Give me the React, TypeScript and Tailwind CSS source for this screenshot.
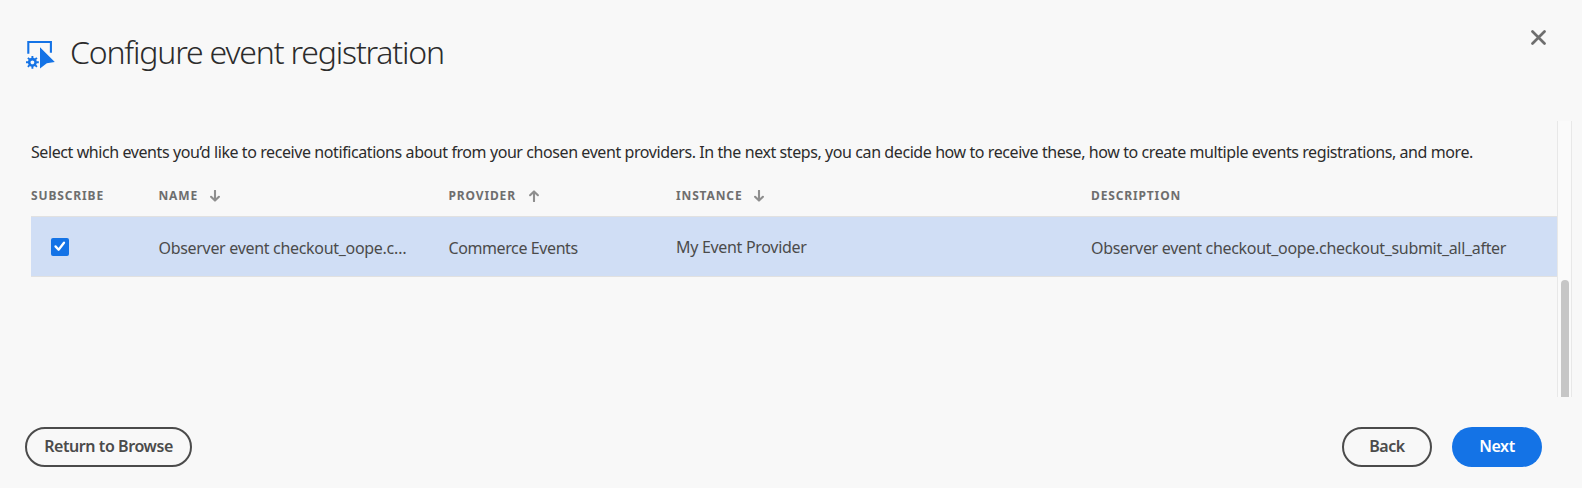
import React from 'react';

function EventIcon() {
  return (
    <svg className="block h-8 w-8" viewBox="0 0 32 32" fill="none">
      <path d="M3.3 15.7V4h22.6V14.8" stroke="#1473e6" strokeWidth="2.1" />
      <path d="M15 9.2 29.8 24l-8 1.3L15 30.5z" fill="#1473e6" />
      <g transform="translate(7.4 24.3)">
        <circle r="3.2" stroke="#1473e6" strokeWidth="2.6" />
        <path
          d="M0-3.8V-6.4M0 3.8V6.4M-3.8 0H-6.4M3.8 0H6.4M-2.9-2.9-4.5-4.5M2.9 2.9 4.5 4.5M-2.9 2.9-4.5 4.5M2.9-2.9 4.5-4.5"
          stroke="#1473e6"
          strokeWidth="1.9"
        />
      </g>
    </svg>
  );
}

function SortArrow({ up = false }: { up?: boolean }) {
  return (
    <svg className={up ? 'block h-3 w-2.5 rotate-180' : 'mt-px block h-3 w-2.5'} viewBox="0 0 10 12" fill="none">
      <path d="M5 .8V10M1.1 6.8 5 10.6 8.9 6.8" stroke="#8e8e8e" strokeWidth="2.1" strokeLinecap="round" strokeLinejoin="round" />
    </svg>
  );
}

export default function App() {
  return (
    <div className="flex h-[488px] w-[1582px] flex-col overflow-hidden bg-[#f8f8f8] font-['Noto_Sans',sans-serif] text-[#4b4b4b]">
      <header className="flex h-[121px] items-start justify-between pr-9 pl-[25px]">
        <div className="flex pt-[38px]">
          <EventIcon />
          <h1 className="ml-[13px] -mt-1 text-[32px] leading-[36px] font-light tracking-[-1.18px] whitespace-nowrap text-[#2c2c2c]">
            Configure event registration
          </h1>
        </div>
        <button className="mt-[30px] block" aria-label="Close">
          <svg className="block h-[15px] w-[15px]" viewBox="0 0 15 15" fill="none">
            <path d="M1.5 1.5 13.5 13.5M13.5 1.5 1.5 13.5" stroke="#6e6e6e" strokeWidth="2.7" strokeLinecap="round" />
          </svg>
        </button>
      </header>

      <main className="flex h-[276px]">
        <div className="w-[1557px] pl-[31px]">
          <p className="pt-[19px] text-[16px] leading-6 tracking-[-0.417px] whitespace-nowrap text-[#2c2c2c]">
            Select which events you’d like to receive notifications about from your chosen event providers. In the next steps, you can decide how to receive these, how to create multiple events registrations, and more.
          </p>
          <div className="grid h-[52px] grid-cols-[127.5px_290px_227.5px_415px_1fr] items-center pt-[11px] text-[12px] font-bold tracking-[0.86px] text-[#6e6e6e]">
            <span>SUBSCRIBE</span>
            <span className="flex items-center gap-3">NAME <SortArrow /></span>
            <span className="flex items-center gap-[13px]">PROVIDER <SortArrow up /></span>
            <span className="flex items-center gap-3">INSTANCE <SortArrow /></span>
            <span>DESCRIPTION</span>
          </div>
          <div className="grid h-[61px] grid-cols-[127.5px_290px_227.5px_415px_1fr] items-center border-y border-[#e1e1e1] bg-[#d0def5] text-[16px] tracking-[-0.31px] whitespace-nowrap">
            <span className="ml-5 flex h-[18px] w-[18px] items-center justify-center rounded-[2px] bg-[#1473e6]">
              <svg className="block h-[18px] w-[18px]" viewBox="0 0 18 18" fill="none">
                <path d="M4.5 8.4 7.6 11.7 13 4.7" stroke="#fff" strokeWidth="2.3" strokeLinecap="round" strokeLinejoin="round" />
              </svg>
            </span>
            <span className="pt-0.5">Observer event checkout_oope.c…</span>
            <span className="pt-0.5 tracking-[-0.4px]">Commerce Events</span>
            <span>My Event Provider</span>
            <span className="pt-0.5">Observer event checkout_oope.checkout_submit_all_after</span>
          </div>
        </div>
        <div className="flex w-[15px] justify-center border-x border-[#e8e8e8] bg-[#fafafa]">
          <div className="mt-[159px] w-2 rounded-t-full bg-[#c6c6c6]" />
        </div>
      </main>

      <footer className="flex justify-between pt-[30px] pr-10 pl-[25px] text-[16px] font-semibold tracking-[-0.42px]">
        <button className="h-10 w-[167px] rounded-full border-2 border-[#4b4b4b] pb-0.5 whitespace-nowrap">Return to Browse</button>
        <div className="flex gap-5">
          <button className="h-10 w-[90px] rounded-full border-2 border-[#4b4b4b] pb-0.5">Back</button>
          <button className="h-10 w-[90px] rounded-full bg-[#1473e6] pb-0.5 text-white">Next</button>
        </div>
      </footer>
    </div>
  );
}
